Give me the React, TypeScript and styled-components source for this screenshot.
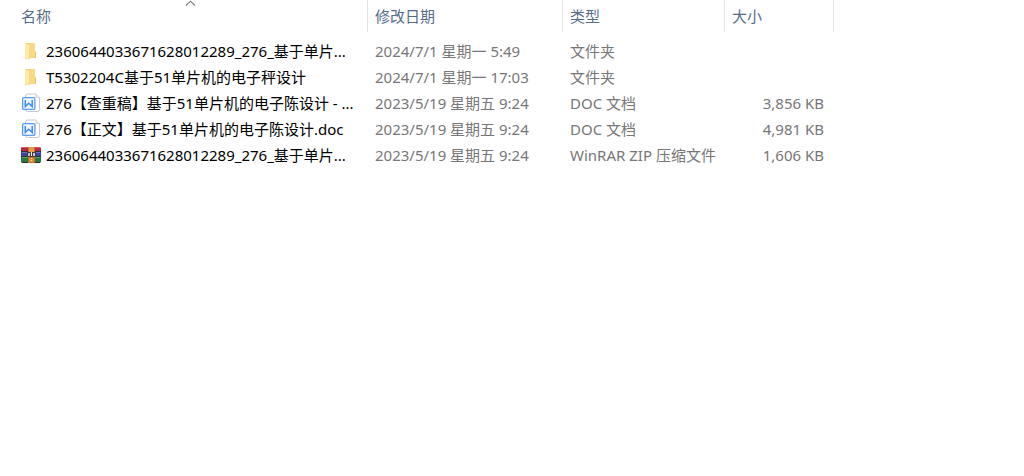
import React from 'react';
import styled, { createGlobalStyle } from 'styled-components';

const GlobalStyle = createGlobalStyle`
  *, *::before, *::after { box-sizing: border-box; }
  body {
    margin: 0;
    background: #ffffff;
    font-family: "Noto Sans", "Noto Sans CJK SC", sans-serif;
    font-size: 15px;
    line-height: 26px;
  }
`;

const FileTable = styled.table`
  width: 100%;
  table-layout: fixed;
  border-collapse: separate;
  border-spacing: 0;
`;

const Column = styled.col<{ $width?: number }>`
  width: ${({ $width }) => ($width ? `${$width}px` : 'auto')};
`;

const HeaderCell = styled.th<{ $first?: boolean }>`
  position: relative;
  height: 32px;
  padding: 0 0 0 ${({ $first }) => ($first ? 21 : 7)}px;
  border-right: 1px solid #e5e5e5;
  text-align: left;
  font-weight: 400;
`;

const SortButton = styled.button`
  display: block;
  width: 100%;
  height: 32px;
  padding: 0;
  border: 0;
  background: none;
  color: #566b88;
  font: inherit;
  text-align: left;
`;

const SortArrow = styled.svg`
  position: absolute;
  top: 0;
  left: 185px;
`;

const Body = styled.tbody`
  &::before {
    content: "";
    display: table-row;
    height: 6px;
  }
`;

const Cell = styled.td<{ $align?: 'right' }>`
  height: 26px;
  padding: 0 ${({ $align }) => ($align ? 10 : 0)}px 0 7px;
  color: #777777;
  text-align: ${({ $align }) => $align ?? 'left'};
  white-space: nowrap;
`;

const NameCell = styled(Cell)`
  padding-left: 21px;
  color: #000000;
`;

const FileName = styled.div`
  display: flex;
  align-items: center;
  gap: 5px;
  height: 26px;
`;

const Icon = styled.svg`
  flex: none;
  width: 20px;
  height: 20px;
`;

const FolderIcon = () => (
  <Icon viewBox="0 0 20 20" aria-hidden="true">
    <path d="M4 2h5v16H4z" fill="#f4cf6b" />
    <path d="M8 2h6v8l1 1v6H8z" fill="#f8da85" />
    <path d="M14 10l1 1v6h-1z" fill="#edc566" />
    <path d="M4 2l4 2v15l-4-2z" fill="#ffe9ae" />
  </Icon>
);

const DocIcon = () => (
  <Icon viewBox="0 0 20 20" aria-hidden="true">
    <path
      d="M4.5 4V3q0-2 2-2h8.500l3.500 3.500v12q0 2-2 2h-10q-2 0-2-2"
      fill="#fff"
      stroke="#c3c8d0"
      strokeWidth="1"
    />
    <path d="M15 1v3.500h3.500" fill="#eef0f4" stroke="#d0d4db" strokeWidth="1" />
    <rect x="1.6" y="4.6" width="12.3" height="11.8" rx="1.2" fill="#f2f7ff" stroke="#5a9bfb" strokeWidth="1.3" />
    <path d="M4.300 7v6.500l3.400-3.300 3.500 3.300V7" fill="none" stroke="#3d88f8" strokeWidth="1.5" />
  </Icon>
);

const ArchiveIcon = () => (
  <Icon viewBox="0 0 20 20" aria-hidden="true">
    <path d="M1 2h18l1 1v4H0V3z" fill="#b52b43" />
    <path d="M1 2h18v1H1z" fill="#df5262" />
    <path d="M0 7h20v5H0z" fill="#3945a5" />
    <path d="M1 7h18v1H1z" fill="#6578cd" />
    <path d="M0 12h20v5l-1 1H1l-1-1z" fill="#247a40" />
    <path d="M1 12h18v1H1z" fill="#4ba75a" />
    <path d="M0 6h20v1H0zM0 11h20v1H0zM1 17h18v1H1z" fill="#342b3c" />
    <path d="M7 2h7v16H7z" fill="#c96a28" />
    <path d="M8 2h5v5H8z" fill="#e8994a" />
    <path d="M6 7h9v5H6z" fill="#4a3838" />
    <path d="M7 8h2v3H7zM12 8h2v3h-2z" fill="#c9c6c8" />
    <path d="M10 7h1v4h-1z" fill="#f1eee6" />
    <path d="M8 13h5v4H8z" fill="#e58c36" />
    <path d="M10 13h1v1h-1zM10 15h1v1h-1z" fill="#fff0c8" />
  </Icon>
);

const icons = { folder: FolderIcon, doc: DocIcon, archive: ArchiveIcon };

interface FileEntry {
  name: string;
  icon: keyof typeof icons;
  modified: string;
  type: string;
  size?: string;
}

const files: FileEntry[] = [
  { name: '2360644033671628012289_276_基于单片...', icon: 'folder', modified: '2024/7/1 星期一 5:49', type: '文件夹' },
  { name: 'T5302204C基于51单片机的电子秤设计', icon: 'folder', modified: '2024/7/1 星期一 17:03', type: '文件夹' },
  { name: '276【查重稿】基于51单片机的电子陈设计 - ...', icon: 'doc', modified: '2023/5/19 星期五 9:24', type: 'DOC 文档', size: '3,856 KB' },
  { name: '276【正文】基于51单片机的电子陈设计.doc', icon: 'doc', modified: '2023/5/19 星期五 9:24', type: 'DOC 文档', size: '4,981 KB' },
  { name: '2360644033671628012289_276_基于单片...', icon: 'archive', modified: '2023/5/19 星期五 9:24', type: 'WinRAR ZIP 压缩文件', size: '1,606 KB' },
];

const columns = [
  { label: '名称', width: 368 },
  { label: '修改日期', width: 195 },
  { label: '类型', width: 162 },
  { label: '大小', width: 109 },
];

export default function App() {
  return (
    <>
      <GlobalStyle />
      <FileTable>
        <colgroup>
          {columns.map(({ label, width }) => (
            <Column key={label} $width={width} />
          ))}
          <Column />
        </colgroup>
        <thead>
          <tr>
            {columns.map(({ label }, index) => (
              <HeaderCell key={label} $first={index === 0} aria-sort={index === 0 ? 'ascending' : undefined}>
                <SortButton type="button">{label}</SortButton>
                {index === 0 && (
                  <SortArrow width="11" height="7" viewBox="0 0 11 7" aria-hidden="true">
                    <path d="M1 5.5L5.5 1.2L10 5.5" fill="none" stroke="#777" strokeWidth="1.1" />
                  </SortArrow>
                )}
              </HeaderCell>
            ))}
          </tr>
        </thead>
        <Body>
          {files.map((file, index) => {
            const FileIcon = icons[file.icon];
            return (
              <tr key={index}>
                <NameCell>
                  <FileName>
                    <FileIcon />
                    {file.name}
                  </FileName>
                </NameCell>
                <Cell>{file.modified}</Cell>
                <Cell>{file.type}</Cell>
                <Cell $align="right">{file.size}</Cell>
              </tr>
            );
          })}
        </Body>
      </FileTable>
    </>
  );
}
